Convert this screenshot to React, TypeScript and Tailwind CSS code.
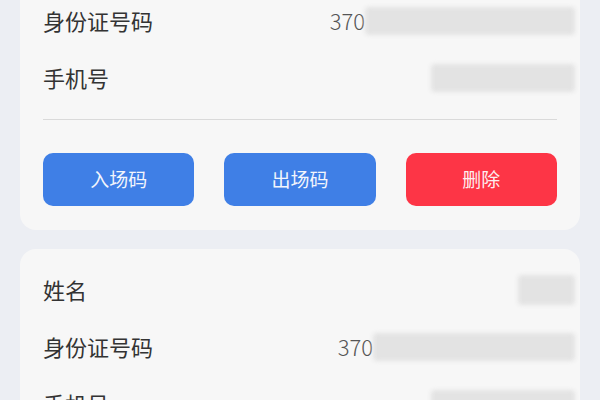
import React from 'react'

interface Person {
  idPrefix: string
  idBlobWidth: number
}

const font = { fontFamily: '"Noto Sans CJK SC", "Noto Sans", sans-serif' }

function Blob({ className, width }: { className: string; width?: number }) {
  return <div className={`rounded-sm bg-[#e3e3e3] blur-[2px] ${className}`} style={width ? { width } : undefined} />
}

function Row({ label, children }: { label: string; children?: React.ReactNode }) {
  return (
    <div className="flex h-[57px] items-center justify-between">
      <span className="text-[22px] text-[#333333]">{label}</span>
      <div className="-mr-[18px] flex items-center text-[22px] font-light text-[#555555]">{children}</div>
    </div>
  )
}

function PersonCard({ person, actions }: { person: Person; actions: boolean }) {
  return (
    <div className="rounded-2xl bg-[#f7f7f7] px-[23px] pb-6 pt-3">
      <Row label="姓名">
        <Blob className="h-[30px] w-[57px]" />
      </Row>
      <Row label="身份证号码">
        <span>{person.idPrefix}</span>
        <Blob className="h-[28px]" width={person.idBlobWidth} />
      </Row>
      <Row label="手机号">
        <Blob className="h-[28px] w-[144px]" />
      </Row>
      {actions && (
        <>
          <div className="mt-[13px] h-px bg-[#dadada]" />
          <div className="mt-[33px] grid grid-cols-3 gap-[30px]">
            <button className="h-[53px] rounded-[10px] bg-[#3f7fe6] text-[19px] text-[#f2f5fc]">入场码</button>
            <button className="h-[53px] rounded-[10px] bg-[#3f7fe6] text-[19px] text-[#f2f5fc]">出场码</button>
            <button className="h-[53px] rounded-[10px] bg-[#fd3546] text-[19px] text-[#fdeef0]">删除</button>
          </div>
        </>
      )}
    </div>
  )
}

export default function App() {
  return (
    <div className="h-[400px] w-[600px] overflow-hidden bg-[#eceef3]" style={font}>
      <div className="-mt-[77px] flex flex-col gap-[19px] px-5">
        <PersonCard person={{ idPrefix: '370', idBlobWidth: 210 }} actions />
        <PersonCard person={{ idPrefix: '370', idBlobWidth: 202 }} actions />
      </div>
    </div>
  )
}
